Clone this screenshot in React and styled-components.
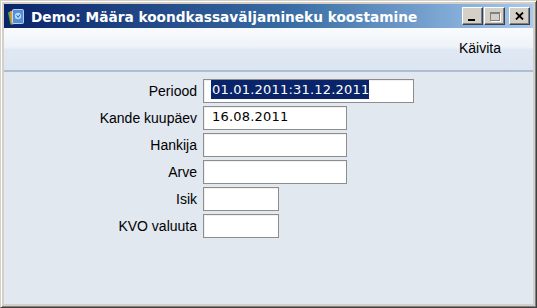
import React from "react";
import styled, { createGlobalStyle } from "styled-components";

const GlobalStyle = createGlobalStyle`
    html, body {
        margin: 0;
        padding: 0;
        background: #ffffff;
    }
    * {
        box-sizing: border-box;
    }
`;

const fields = [
    { label: "Periood", value: "01.01.2011:31.12.2011", width: 211, selected: true },
    { label: "Kande kuupäev", value: "16.08.2011", width: 144 },
    { label: "Hankija", value: "", width: 144 },
    { label: "Arve", value: "", width: 144 },
    { label: "Isik", value: "", width: 76 },
    { label: "KVO valuuta", value: "", width: 76 },
];

const AppIcon = () => (
    <svg width="17" height="17" viewBox="0 0 17 17">
        <rect x="1" y="3" width="10" height="13" rx="1" fill="#5ca44a" transform="rotate(-12 6 9)" />
        <rect x="2.5" y="2.5" width="10" height="13" rx="1" fill="#e3933a" transform="rotate(-6 7 9)" />
        <rect x="4.5" y="1.5" width="11" height="14" rx="1" fill="#4f8fdc" stroke="#d8e8f8" strokeWidth="0.8" />
        <circle cx="10" cy="8" r="3.2" fill="#b9d8f6" />
        <path d="M8.6 7.2 L10.2 9.4 L12 6.6" stroke="#2d62b0" strokeWidth="1" fill="none" />
    </svg>
);

const App = () => {
    return (
        <>
            <GlobalStyle />
            <Window>
                <TitleBar>
                    <AppIcon />
                    <Title>Demo: Määra koondkassaväljamineku koostamine</Title>
                    <Buttons>
                        <CaptionButton aria-label="minimize">
                            <MinGlyph />
                        </CaptionButton>
                        <CaptionButton aria-label="maximize" disabled>
                            <MaxGlyph />
                        </CaptionButton>
                        <CaptionButton aria-label="close" $gap>
                            <svg width="9" height="8" viewBox="0 0 9 8">
                                <path d="M1 0.5 L8 7.5 M8 0.5 L1 7.5" stroke="#000" strokeWidth="1.8" />
                            </svg>
                        </CaptionButton>
                    </Buttons>
                </TitleBar>
                <Toolbar>
                    <ToolButton>Käivita</ToolButton>
                </Toolbar>
                <Form>
                    {fields.map((f) => (
                        <React.Fragment key={f.label}>
                            <Label>{f.label}</Label>
                            <Input style={{ width: f.width }}>
                                {f.selected ? <Selection>{f.value}</Selection> : f.value}
                            </Input>
                        </React.Fragment>
                    ))}
                </Form>
            </Window>
        </>
    );
};

const Window = styled.div`
    width: 537px;
    height: 308px;
    display: flex;
    flex-direction: column;
    background: #d4d0c8;
    border-top: 1px solid #d4d0c8;
    border-left: 1px solid #d4d0c8;
    border-right: 1px solid #404040;
    border-bottom: 1px solid #404040;
    box-shadow: inset 1px 1px 0 #ffffff, inset -1px -1px 0 #808080;
    padding: 3px;
`;

const TitleBar = styled.div`
    height: 24px;
    flex: none;
    display: flex;
    align-items: center;
    padding: 0 3px 0 4px;
    gap: 6px;
    background: linear-gradient(to right, #0a246a 0%, #3a6ea5 55%, #a6caf0 100%);
`;

const Title = styled.div`
    flex: 1;
    font-family: "DejaVu Sans", Verdana, sans-serif;
    font-weight: bold;
    font-size: 13.7px;
    color: #ffffff;
    white-space: nowrap;
    padding-top: 1px;
`;

const Buttons = styled.div`
    display: flex;
    align-items: center;
`;

const CaptionButton = styled.button`
    width: 21px;
    height: 18px;
    margin-left: ${(p) => (p.$gap ? "4px" : "1px")};
    padding: 0;
    display: flex;
    align-items: center;
    justify-content: center;
    background: #d4d0c8;
    border: none;
    border-top: 1px solid #ffffff;
    border-left: 1px solid #ffffff;
    border-right: 1px solid #404040;
    border-bottom: 1px solid #404040;
    box-shadow: inset -1px -1px 0 #808080;
`;

const MinGlyph = styled.span`
    display: block;
    width: 7px;
    height: 2px;
    background: #000000;
    margin-top: 8px;
    margin-right: 2px;
`;

const MaxGlyph = styled.span`
    display: block;
    width: 10px;
    height: 9px;
    border: 1px solid #808080;
    border-top-width: 2px;
    box-shadow: 1px 1px 0 #ffffff;
`;

const Toolbar = styled.div`
    height: 44px;
    flex: none;
    display: flex;
    align-items: center;
    justify-content: flex-end;
    padding: 0 32px 0 0;
    background: linear-gradient(to bottom, #f9fbfd 0%, #eef3f9 45%, #dfe8f3 52%, #dce6f2 100%);
    border-bottom: 2px solid #aebdd0;
    box-shadow: 0 1px 0 #f2f5f9;
`;

const ToolButton = styled.div`
    font-family: "Liberation Sans", Arial, sans-serif;
    font-size: 14px;
    color: #000000;
    padding-bottom: 2px;
`;

const Form = styled.div`
    flex: 1;
    display: grid;
    grid-template-columns: 193px auto;
    column-gap: 6px;
    row-gap: 3px;
    grid-auto-rows: 24px;
    align-content: start;
    justify-items: start;
    padding-top: 7px;
    background: #e1e8f0;
`;

const Label = styled.div`
    justify-self: end;
    align-self: center;
    font-family: "Liberation Sans", Arial, sans-serif;
    font-size: 14px;
    color: #000000;
    white-space: nowrap;
`;

const Input = styled.div`
    height: 24px;
    display: flex;
    align-items: flex-start;
    padding: 1px 0 0 8px;
    background: #ffffff;
    border: 1px solid #8d8d8d;
    box-shadow: inset 1px 1px 0 #f0f0f0;
    font-family: "DejaVu Sans", Verdana, sans-serif;
    font-size: 13px;
    letter-spacing: 0.2px;
    line-height: 18px;
    color: #000000;
    white-space: nowrap;
`;

const Selection = styled.span`
    background: #0a246a;
    color: #ffffff;
    margin: -1px 0 0 -1px;
    padding: 1px 0 0 1px;
`;

export default App;
